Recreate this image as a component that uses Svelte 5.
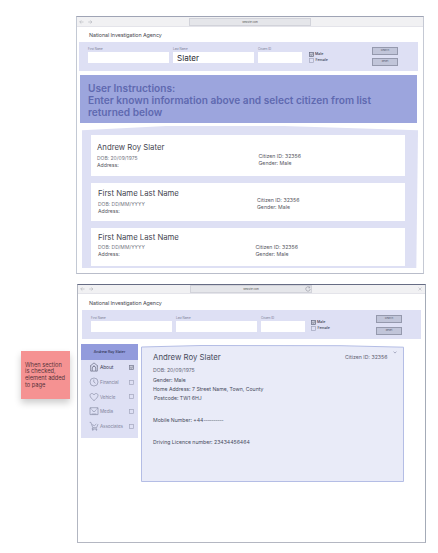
<script>
  const cards = [
    { name: 'Andrew Roy Slater', dob: '20/09/1975', id: '32356', cls: 'first' },
    { name: 'First Name Last Name', dob: 'DD/MM/YYYY', id: '32356', cls: 'second' },
    { name: 'First Name Last Name', dob: 'DD/MM/YYYY', id: '32356', cls: 'third' }
  ];
  const sections = [
    { label: 'About', icon: 'home', on: true },
    { label: 'Financial', icon: 'clock' },
    { label: 'Vehicle', icon: 'heart' },
    { label: 'Media', icon: 'mail' },
    { label: 'Associates', icon: 'cart' }
  ];
</script>

{#snippet chrome(detail)}
  <div class="bar">
    <svg class="arrows" viewBox="0 0 14 6"><path d="M4.5 3H.8M2.3 1.4.7 3l1.6 1.6M9.2 3h3.7M11.3 1.4 12.9 3l-1.6 1.6" /></svg>
    <div class="url">
      <span>website.com</span>
      {#if detail}<svg class="reload" viewBox="0 0 6 6"><path d="M4.6 1.4A2.2 2.2 0 1 0 5.2 3M4.8.4v1.4H3.4" /></svg>{/if}
    </div>
    {#if detail}<svg class="close" viewBox="0 0 4 4"><path d="m.6.6 2.8 2.8M3.4.6.6 3.4" /></svg>{/if}
  </div>
  <div class="agency">National Investigation Agency</div>
{/snippet}

{#snippet box(on)}
  <svg class="box" class:on viewBox="0 0 5 5"><rect x=".5" y=".5" width="4" height="4" />{#if on}<path d="m1.4 2.5.9.9 1.5-1.9" />{/if}</svg>
{/snippet}

{#snippet search(last)}
  <div class="search">
    <div class="field"><span>First Name</span><div class="input"></div></div>
    <div class="field"><span>Last Name</span><div class="input">{last}</div></div>
    <div class="field small"><span>Citizen ID</span><div class="input"></div></div>
    <div class="checks">
      <div>{@render box(true)}<b>Male</b></div>
      <div>{@render box(false)}<b class="fem">Female</b></div>
    </div>
    <div class="buttons"><div>Search</div><div>Reset</div></div>
  </div>
{/snippet}

<div class="canvas">
  <section class="window results">
    {@render chrome(false)}
    {@render search('Slater')}
    <div class="banner">User Instructions:<br />Enter known information above and select citizen from list<br />returned below</div>
    <div class="list">
      {#each cards as c}
        <article class={c.cls}>
          <div class="person">
            <h2>{c.name}</h2>
            <p class="dob">DOB: {c.dob}</p>
            <p>Address:</p>
          </div>
          <div class="meta"><p>Citizen ID: {c.id}</p><p>Gender: Male</p></div>
        </article>
      {/each}
    </div>
  </section>

  <section class="window profile">
    {@render chrome(true)}
    {@render search('')}
    <div class="columns">
      <nav>
        <div class="who">Andrew Roy Slater</div>
        {#each sections as s}
          <div class="item" class:active={s.on}>
            <svg class="icon" viewBox="0 0 10 10">
              {#if s.icon === 'home'}
                <path d="M1 4.2 5 .9l4 3.3M1.7 3.8v5.3h1.6V6a1.7 1.7 0 0 1 3.4 0v3.1h1.6V3.8M3.4 9.1h3.2M4.2 4h1.6" />
              {:else if s.icon === 'clock'}
                <circle cx="5" cy="5" r="4" /><path d="M4.8 2.5V5l1.7 1.3" />
              {:else if s.icon === 'heart'}
                <path d="M5 8.7C3.3 7.2 1 5.3 1 3.4c0-2.3 3-2.6 4-.4 1-2.2 4-1.9 4 .4C9 5.3 6.7 7.2 5 8.7Z" />
              {:else if s.icon === 'mail'}
                <path d="M1 1.7h8v6.9H1ZM1.3 2l1.4 1.6M8.7 2 7.3 3.6M3 4.3l2 1.5 2-1.5M2.6 8h4.8" />
              {:else}
                <path d="M.7 1.4h1.2l1.9 5.3h3.8L9 3.1M3.2 3.6l2.2 1.1L7.3 3M3.8 6.7 3 8h5" /><circle cx="3.8" cy="8.8" r=".5" /><circle cx="7.4" cy="8.8" r=".5" />
              {/if}
            </svg>
            <span>{s.label}</span>
            {@render box(s.on)}
          </div>
        {/each}
      </nav>
      <main>
        <svg class="edge" viewBox="0 0 263 138" preserveAspectRatio="none">
          <path d="M.5 2 60 .5l140 .2 62.5 1.5v134.3H.5Z" />
        </svg>
        <div class="facts">
          <h2>Andrew Roy Slater</h2>
          <p class="dob">DOB: 20/09/1975</p>
          <p class="gender">Gender: Male</p>
          <p class="home">Home Address: 7 Street Name, Town, County</p>
          <p class="post">Postcode: TW1 6HJ</p>
          <p class="mobile">Mobile Number: +44<span>----------</span></p>
          <p class="licence">Driving Licence number: 23434456464</p>
        </div>
        <div class="cid">Citizen ID: 32356</div>
        <svg class="chev" viewBox="0 0 4 3"><path d="m.6.6 1.4 1.5L3.4.6" /></svg>
      </main>
    </div>
  </section>

  <aside>When section<br />is checked,<br />element added<br />to page</aside>
</div>

<style>
  :global(body) { background: #fff; }
  .canvas { position: relative; width: 438px; height: 553px; overflow: hidden; background: #fff; font-family: Inter, "Liberation Sans", sans-serif; color: #484a58; }
  .canvas * { box-sizing: border-box; }
  h2, p { margin: 0; font-weight: 400; white-space: nowrap; }
  svg { display: block; fill: none; flex: none; }
  .window { position: absolute; display: flex; flex-direction: column; background: #fff; }
  .results { left: 76px; top: 16px; width: 348px; height: 258px; border: 1px solid #b9bdca; border-top-color: #9fa4b5; border-left-color: #c3c9d4; border-right-color: #c5c9d4; }
  .profile { left: 77px; top: 284px; width: 349px; height: 259px; border: 1px solid #b4b7c2; border-top-color: #666c84; border-left-color: #b2b6c1; border-right-color: #a4abb7; }
  .bar { height: 10px; flex: none; display: flex; align-items: center; background: #f1f1f3; border-bottom: 1px solid #e4e4ea; }
  .profile .bar { height: 9px; }
  .arrows { width: 14px; height: 6px; margin-left: 2px; stroke: #b0b1bb; stroke-width: .6; }
  .url { width: 122px; height: 8px; margin-left: 96px; display: flex; align-items: center; justify-content: center; position: relative; background: #e5e6ea; border: 1px solid #d2d3da; font-size: 2.6px; color: #555; }
  .reload { position: absolute; right: 0; top: 0; width: 6px; height: 6px; stroke: #8d8f9b; stroke-width: .6; }
  .close { width: 4px; height: 4px; margin-left: 106px; stroke: #a5a6b0; stroke-width: .5; }
  .agency { height: 15px; flex: none; padding-left: 12px; line-height: 16px; font-size: 5.4px; letter-spacing: -.1px; color: #4b4b52; white-space: nowrap; }
  .profile .agency { height: 16px; padding-left: 11px; line-height: 19px; }
  .search { flex: none; width: 339px; height: 29px; margin-left: 2px; padding-left: 9px; display: flex; background: #dee0f4; }
  .profile .search { margin-left: 4px; }
  .field { flex: none; width: 81px; margin-right: 4px; }
  .field.small { width: 44px; margin: 0; }
  .field span { display: block; height: 10px; padding: 5px 0 0; line-height: 4px; font-size: 2.9px; color: #777a92; }
  .profile .field span { height: 11px; padding-top: 6px; }
  .input { height: 11px; background: #fff; color: #292b35; font-size: 8.1px; line-height: 12px; padding-left: 4px; }
  .checks { flex: none; width: 69px; padding: 9px 0 0 7px; }
  .profile .checks { padding-left: 6px; }
  .checks > div { height: 6px; display: flex; align-items: center; gap: 1px; }
  .checks b { font-size: 3.6px; font-weight: 500; line-height: 6px; color: #3b3d52; }
  .checks .fem { margin-left: .5px; }
  .box { width: 5px; height: 5px; stroke: #a3a6bd; stroke-width: .7; }
  .box.on { stroke: #666a7f; fill: #c8cad8; }
  .box.on path { fill: none; }
  .buttons { display: flex; flex-direction: column; gap: 3px; padding-top: 5px; margin-left: 2px; }
  .results .buttons { margin-left: 1px; }
  .buttons div { width: 26px; height: 8px; border: 1px solid #9599ad; background: #c1c5d9; font-size: 2.5px; line-height: 6px; text-align: center; color: #555971; }
  .profile .buttons { gap: 4px; }
  .banner { flex: none; width: 337px; height: 48px; margin: 4px 0 0 3px; padding: 6.5px 0 0 8px; background: #9ca5dd; color: #5f69b0; font-size: 10.13px; font-weight: 600; line-height: 12.4px; white-space: nowrap; }
  .list { flex: none; width: 336px; height: 142px; margin: 3px 0 0 5px; padding: 9px 0 0 9px; background: #dee0f4; clip-path: polygon(0 3%, 25% 0, 60% 0, 100% 3%, 99.5% 100%, 0 100%); }
  article { width: 314px; height: 38px; margin-bottom: 7px; padding-left: 6px; display: flex; background: #fff; }
  article.first { height: 41px; padding-top: 2px; }
  .person { width: 161px; }
  .second, .third { padding-left: 7px; }
  .second .person { width: 159px; }
  .person h2 { font-size: 7.75px; line-height: 10px; padding-top: 5px; color: #454650; }
  .first h2 { padding-top: 5px; }
  .third h2 { padding-top: 4px; }
  .person p, .meta p { font-size: 5.2px; line-height: 7px; color: #565762; }
  .person .dob { padding-top: 2px; font-size: 5px; line-height: 8px; color: #74757f; }
  .meta { padding-top: 14px; }
  .first .meta { padding-left: .5px; padding-top: 16px; }
  .third .meta { padding-top: 16px; margin-left: -3.5px; }
  .third .dob { padding-top: 1px; }
  .columns { display: flex; padding: 5px 0 0 3px; }
  nav { width: 57px; height: 94px; background: #dee0f4; }
  .who { height: 16px; line-height: 17px; background: #929bdc; text-align: center; font-size: 3.6px; font-weight: 500; color: #2e3150; }
  .item { height: 14.7px; display: flex; align-items: center; padding-left: 8px; color: #8486a0; font-size: 4.7px; }
  .item.active { color: #3f425c; font-size: 4.9px; }
  .active .icon { stroke: #696c83; }
  .active .box { stroke: #777a8f; }
  .icon { width: 10px; height: 10px; stroke: #8d90a9; stroke-width: .7; }
  .item span { width: 29px; margin-left: 1px; white-space: nowrap; letter-spacing: -.13px; }
  main { position: relative; width: 263px; height: 138px; margin: 1px 0 0 3px; display: flex; }
  .edge { position: absolute; inset: 0; width: 263px; height: 138px; fill: #e9ebf8; stroke: #b4bde5; stroke-width: 1; }
  .facts { position: relative; width: 204px; padding: 6px 0 0 12px; color: #484b5d; }
  .facts h2 { font-size: 7.8px; line-height: 12px; }
  .facts p { font-size: 5.17px; line-height: 9px; }
  .facts .dob { margin-top: 3px; line-height: 9px; color: #666879; }
  .facts .gender { margin-top: .5px; }
  .facts .post { padding-left: 1px; }
  .facts .mobile { margin-top: 13px; }
  .mobile span { letter-spacing: -.4px; }
  .facts .licence { margin-top: 13px; }
  .cid { position: relative; padding-top: 7px; font-size: 5.2px; line-height: 11px; color: #5f6172; white-space: nowrap; }
  .chev { position: relative; width: 4px; height: 3px; margin: 6px 0 0 6px; stroke: #8083a0; stroke-width: .6; }
  aside { position: absolute; left: 21px; top: 351px; width: 49px; height: 48px; padding: 10.5px 0 0 4px; background: #f59292; box-shadow: 0 4px 7px rgba(0,0,0,.2); font-size: 5.7px; line-height: 6.8px; color: #55333b; white-space: nowrap; }
</style>
